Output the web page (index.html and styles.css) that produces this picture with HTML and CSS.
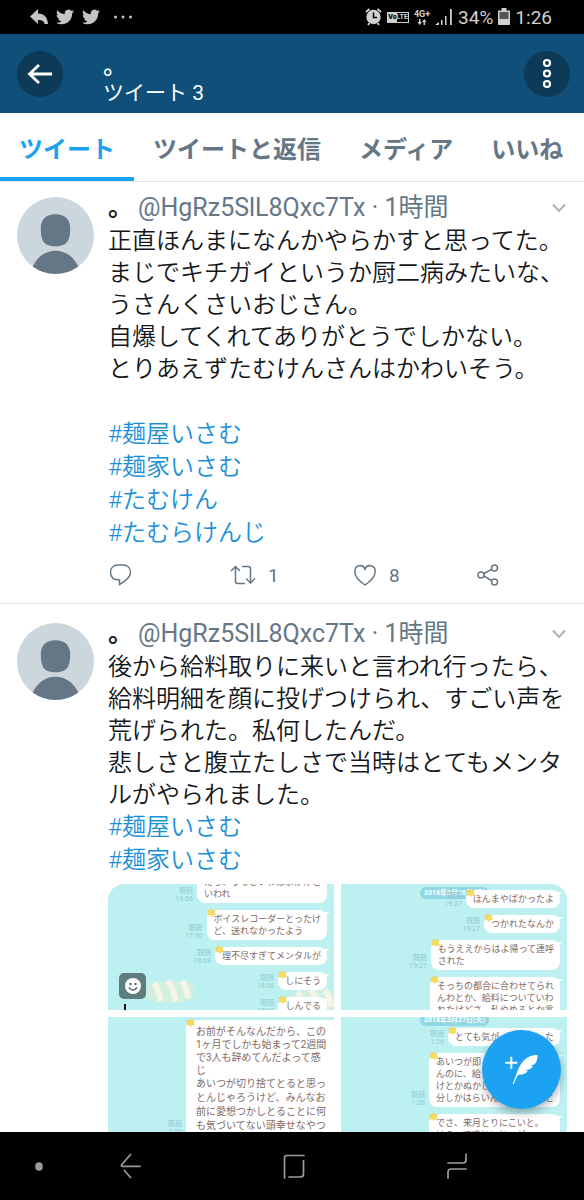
FILE: index.html
```html
<!DOCTYPE html>
<html lang="ja">
<head>
<meta charset="utf-8">
<meta name="viewport" content="width=device-width, initial-scale=1">
<title>ツイート</title>
<link rel="stylesheet" href="styles.css">
</head>
<body>
<svg class="defs" aria-hidden="true">
  <symbol id="bird" viewBox="0 0 24 24"><path fill="currentColor" d="M23.953 4.57a10 10 0 01-2.825.775 4.958 4.958 0 002.163-2.723c-.951.555-2.005.959-3.127 1.184a4.92 4.92 0 00-8.384 4.482C7.69 8.095 4.067 6.13 1.64 3.162a4.822 4.822 0 00-.666 2.475c0 1.71.87 3.213 2.188 4.096a4.904 4.904 0 01-2.228-.616v.06a4.923 4.923 0 003.946 4.827 4.996 4.996 0 01-2.212.085 4.936 4.936 0 004.604 3.417 9.867 9.867 0 01-6.102 2.105c-.39 0-.779-.023-1.17-.067a13.995 13.995 0 007.557 2.209c9.053 0 13.998-7.496 13.998-13.985 0-.21 0-.42-.015-.63A9.935 9.935 0 0024 4.59z"/></symbol>
  <symbol id="avatar" viewBox="0 0 76 76"><circle cx="38" cy="38" r="38" fill="#ccd6dd"/><path fill="#657786" d="M38 17c9 0 14.500 5 14.500 13.500 0 12-2.500 18-14.500 18s-14.500-6-14.500-18C23.500 22 29 17 38 17zM15.500 68.600C20 59 28 53 38 53s18 6 22.500 15.600A38 38 0 0 1 15.500 68.600z"/></symbol>
  <symbol id="chevron" viewBox="0 0 16 16"><path d="M2 4.500l6 6.500 6-6.500" fill="none" stroke="#aab8c2" stroke-width="2.200"/></symbol>
  <symbol id="star" viewBox="0 0 10 10"><path fill="#f9dc5c" stroke="#eac33c" stroke-width=".6" stroke-linejoin="round" d="M4.500 1l1.700 1.700 2.800-.2-1 2.500 1.400 2.200-2.500.5L5.500 9.500 3.900 7.600 1 7.800l1-2.500L.7 3.200l2.500-.3z"/></symbol>
  <symbol id="candy" viewBox="0 0 50 24"><path fill="#d3efe0" d="M2 8C9 1 38 0 45 4c7 5 5 15-1 17-9 4-36 4-41-1-4-4-4-9-1-12z"/><path d="M9 4c4 4 5 11 7 18M23 2c4 5 6 12 8 20M37 2c3 4 5 10 6 17" fill="none" stroke="#f4f5e6" stroke-width="6"/></symbol>
</svg>

<div class="screen">
  <div class="status">
    <div class="status-side">
      <svg width="18" height="18" viewBox="0 0 18 18"><path fill="#c4c4c4" d="M0 8.500L8 1v4.500c6 0 9.500 3.500 10 10.500h-3.500c-.5-3-2.500-4-6.500-4v4z"/></svg>
      <svg width="18" height="18"><use href="#bird"/></svg>
      <svg width="18" height="18"><use href="#bird"/></svg>
      <svg class="more" width="18" height="4" viewBox="0 0 18 4"><g fill="#c4c4c4"><circle cx="1.500" cy="2" r="1.500"/><circle cx="9" cy="2" r="1.500"/><circle cx="16.500" cy="2" r="1.500"/></g></svg>
    </div>
    <div class="status-side status-right">
      <svg width="17" height="18" viewBox="0 0 17 18"><circle cx="8.500" cy="9" r="7.200" fill="#d0d0d0"/><path d="M8.500 4.500v5H12" fill="none" stroke="#000" stroke-width="1.500"/><path d="M1 4l3.500-3M16 4l-3.500-3M3 17l1.500-2M14 17l-1.500-2" stroke="#d0d0d0" stroke-width="1.800"/></svg>
      <span class="volte"><b>Vo</b><i>LTE</i></span>
      <span class="network"><span>4G+</span><svg width="10" height="6" viewBox="0 0 10 6"><path fill="#d0d0d0" d="M2 0h1.500v3H5L2.700 6 .5 3H2zM6.500 6H8V3h1.500L7.300 0 5 3h1.500z"/></svg></span>
      <svg width="18" height="18" viewBox="0 0 18 18"><path fill="#d0d0d0" d="M0 17l4-3v3zM6 12h1.500v5H6zM10 8h1.500v9H10zM15 1h1.800v16H15z"/></svg>
      <span class="clock">34%</span>
      <svg width="12" height="18" viewBox="0 0 12 18"><path fill="#d0d0d0" d="M3.500 0h5v2.500H12V17H0V2.500h3.500z"/><path fill="#555" d="M1.500 4h9v7h-9z"/></svg>
      <span class="clock">1:26</span>
    </div>
  </div>

  <header class="bar">
    <button class="round" aria-label="戻る"><svg width="26" height="26" viewBox="0 0 26 26"><path d="M12 4l-9.500 9 9.500 9M3 13h22" fill="none" stroke="#fff" stroke-width="2.800"/></svg></button>
    <div class="heading"><h1>。</h1><p>ツイート 3</p></div>
    <button class="round" aria-label="メニュー"><svg width="10" height="32" viewBox="0 0 10 32"><g fill="none" stroke="#fff" stroke-width="2.200"><circle cx="5" cy="5" r="3"/><circle cx="5" cy="15.500" r="3"/><circle cx="5" cy="26" r="3"/></g></svg></button>
  </header>

  <nav class="tabs">
    <a href="#" class="tab active">ツイート</a><a href="#" class="tab">ツイートと返信</a><a href="#" class="tab">メディア</a><a href="#" class="tab">いいね</a>
  </nav>

  <main class="feed">
    <article class="tweet">
      <svg class="avatar"><use href="#avatar"/></svg>
      <div class="content">
        <div class="meta"><b>。</b><span class="handle">@HgRz5SlL8Qxc7Tx · 1時間</span><button class="plain" aria-label="その他"><svg width="16" height="16"><use href="#chevron"/></svg></button></div>
        <p class="text">正直ほんまになんかやらかすと思ってた。<br>まじでキチガイというか厨二病みたいな、<br>うさんくさいおじさん。<br>自爆してくれてありがとうでしかない。<br>とりあえずたむけんさんはかわいそう。</p>
        <p class="tags spaced"><a href="#">#麺屋いさむ</a><a href="#">#麺家いさむ</a><a href="#">#たむけん</a><a href="#">#たむらけんじ</a></p>
        <div class="actions">
          <button class="plain" aria-label="返信"><svg width="24" height="24" viewBox="0 0 24 24"><path d="M10 2h5c5 0 7.500 3.500 7.500 7.500 0 5-5 8.500-11 12v-4.500C5.500 17 2.500 14 2.500 9.500S5.500 2 10 2z" class="line"/></svg></button>
          <button class="plain" aria-label="リツイート"><svg width="26" height="24" viewBox="0 0 26 24"><path d="M1 8l4.500-4.500L10 8M5.500 4v14q0 2.500 2.500 2.500h7M12 3.500h6q2.500 0 2.500 2.500v14M16 15.500l4.500 4.500 4.500-4.500" class="line"/></svg><span>1</span></button>
          <button class="plain" aria-label="いいね"><svg width="24" height="24" viewBox="0 0 24 24"><path d="M12 22C6 18 1.800 13.500 1.800 8.500c0-6.500 8-8 10.200-2.300 2.200-5.700 10.200-4.200 10.200 2.300C22.200 13.500 18 18 12 22z" class="line"/></svg><span>8</span></button>
          <button class="plain" aria-label="共有"><svg width="24" height="24" viewBox="0 0 24 24"><path d="M8 10.500l7.500-4M8 13l7.500 4.500" class="line"/><g class="line"><circle cx="5" cy="12" r="3"/><circle cx="18.500" cy="5" r="3"/><circle cx="18.500" cy="19" r="3"/></g></svg></button>
        </div>
      </div>
    </article>

    <article class="tweet">
      <svg class="avatar"><use href="#avatar"/></svg>
      <div class="content">
        <div class="meta"><b>。</b><span class="handle">@HgRz5SlL8Qxc7Tx · 1時間</span><button class="plain" aria-label="その他"><svg width="16" height="16"><use href="#chevron"/></svg></button></div>
        <p class="text">後から給料取りに来いと言われ行ったら、<br>給料明細を顔に投げつけられ、すごい声を<br>荒げられた。私何したんだ。<br>悲しさと腹立たしさで当時はとてもメンタ<br>ルがやられました。</p>
        <p class="tags"><a href="#">#麺屋いさむ</a><a href="#">#麺家いさむ</a></p>
        <div class="gallery">
          <div class="shot shot-a">
            <svg class="candy candy-one"><use href="#candy"/></svg><svg class="candy candy-two"><use href="#candy"/></svg>
            <div class="smile"><svg width="16" height="16" viewBox="0 0 16 16"><circle cx="8" cy="8" r="8" fill="#fff"/><circle cx="5.500" cy="6" r="1.200" fill="#566"/><circle cx="10.500" cy="6" r="1.200" fill="#566"/><path d="M3.800 9.500q4.200 5 8.400 0" fill="none" stroke="#566" stroke-width="1.300"/></svg></div>
            <div class="caret"></div>
            <div class="msg"><small>既読<br>16:56</small><p>たら、うるさいわはよかけと<br>いわれ</p></div>
            <div class="msg"><small>既読<br>17:50</small><p><svg class="star"><use href="#star"/></svg>ボイスレコーダーとったけ<br>ど、送れなかったよう</p></div>
            <div class="msg"><small>既読<br>18:08</small><p><svg class="star"><use href="#star"/></svg>理不尽すぎてメンタルが</p></div>
            <div class="msg"><small>既読<br>18:08</small><p><svg class="star"><use href="#star"/></svg>しにそう</p></div>
            <div class="msg"><small>既読<br>18:08</small><p><svg class="star"><use href="#star"/></svg>しんでる</p></div>
          </div>
          <div class="shot shot-b">
            <span class="date">2018年3月26日(月)</span>
            <div class="msg"><small>既読<br>19:27</small><p><svg class="star"><use href="#star"/></svg>ほんまやばかったよ</p></div>
            <div class="msg"><small>既読<br>19:27</small><p><svg class="star"><use href="#star"/></svg>つかれたなんか</p></div>
            <div class="msg"><small>既読<br>19:27</small><p><svg class="star"><use href="#star"/></svg>もうええからはよ帰って連呼<br>された</p></div>
            <div class="msg"><p><svg class="star"><use href="#star"/></svg>そっちの都合に合わせてられ<br>んわとか、給料についていわ<br>れたけどさ、私やめるとか言</p></div>
          </div>
          <div class="shot shot-c">
            <small>既読<br>1:23</small>
            <div class="long"><svg class="star"><use href="#star"/></svg><p>お前がそんなんだから、この<br>1ヶ月でしかも始まって2週間<br>で3人も辞めてんだよって感<br>じ</p><p class="loose">あいつが切り捨てとると思っ<br>とんじゃろうけど、みんなお<br>前に愛想つかしとることに何<br>も気づいてない頭幸せなやつ</p></div>
          </div>
          <div class="shot shot-d">
            <span class="date">2018年3月27日(火)</span>
            <div class="msg"><small>既読<br>1:26</small><p class="mid"><svg class="star"><use href="#star"/></svg><span class="split"><span>とても気が</span><span>た</span></span></p></div>
            <div class="msg"><small>既読<br>1:26</small><p class="wide"><svg class="star"><use href="#star"/></svg>あいつが即<br>んのに、給<br>けとかぬかし<br><span class="split"><span>分しかはらいん</span><span>と</span></span></p></div>
            <div class="msg"><p class="wide"><svg class="star"><use href="#star"/></svg>でさ、来月とりにこいと。<br>は？って感じにじゃが</p></div>
          </div>
        </div>
      </div>
    </article>
    <button class="compose" aria-label="ツイートする"><svg width="33" height="29" viewBox="0 0 33 29"><path d="M.3 7.800h12M6.300 1.800v12" stroke="#fff" stroke-width="2"/><path fill="#fff" d="M32.500 0C29 0 26.500.5 24 1.700 21 3.200 18.500 5.500 16.700 8c-2 3-3.500 6-4.700 9.500L7.700 29h1.200c1.200-3.500 2.600-6.500 4.400-9.200 3.700.3 7-.8 9.700-3.800l-2.800-.6c3.300-.4 5.800-1.700 7.800-4l-2.600-.7C28.500 10.200 30 9 31 7.500c1.200-2.500 1.500-5 1.500-7.500z"/></svg></button>
  </main>

  <footer class="system">
    <button class="plain" aria-label="ナビゲーション固定"><svg width="8" height="9" viewBox="0 0 8 9"><ellipse cx="4" cy="4.500" rx="3.800" ry="4.300" fill="#9c9c9c"/></svg></button>
    <button class="plain" aria-label="前の画面"><svg width="24" height="26" viewBox="0 0 24 26"><path d="M11.500 1.500L2.500 12q-.5 1.300 1 1.300H21M11.500 24.500L5.500 17.500" class="key"/></svg></button>
    <button class="plain" aria-label="ホーム"><svg width="24" height="26" viewBox="0 0 24 26"><path d="M2.500 25V5q0-2.500 2.500-2.500h17M21.500 7.500V21q0 3-3 3H7" class="key"/></svg></button>
    <button class="plain" aria-label="履歴"><svg width="24" height="28" viewBox="0 0 24 28"><path d="M3 11h15q3 0 3-3V2M3 26v-6q0-3 3-3h15" class="key"/></svg></button>
  </footer>
</div>
</body>
</html>
```
FILE: styles.css
```css
* { box-sizing: border-box; }
body {
  margin: 0;
  font-family: Roboto, "Noto Sans CJK JP", sans-serif;
  color: #14171a;
  background: #fff;
}
h1, p { margin: 0; }
a { color: inherit; text-decoration: none; }
svg { display: block; flex: none; }
button { font: inherit; color: inherit; border: 0; padding: 0; }
.plain { background: none; display: flex; align-items: center; }
.defs { position: absolute; width: 0; height: 0; }

.screen { display: flex; flex-direction: column; height: 100vh; }

.status {
  flex: none;
  height: 34px;
  padding: 0 32px 0 30px;
  background: #000;
  color: #c4c4c4;
  display: flex;
  align-items: center;
  justify-content: space-between;
}
.status-side { display: flex; align-items: center; gap: 8px; }
.status-right { gap: 5px; color: #d0d0d0; }
.more { margin-left: 6px; }
.clock { font-size: 19px; }
.volte {
  display: flex;
  font: bold 7px/9px Roboto, sans-serif;
  border: 1px solid #d0d0d0;
}
.volte b { background: #d0d0d0; color: #000; }
.volte i { font-style: normal; }
.network {
  display: flex;
  flex-direction: column;
  align-items: center;
  font: bold 9px/9px Roboto, sans-serif;
}

.bar {
  flex: none;
  display: flex;
  align-items: center;
  height: 79px;
  padding: 0 14px 0 17px;
  background: #104f79;
  color: #fff;
}
.round {
  width: 46px;
  height: 46px;
  border-radius: 50%;
  background: #0d3a57;
  display: flex;
  align-items: center;
  justify-content: center;
}
.heading { flex: 1; padding: 12px 0 0 40px; }
.heading h1 { font-size: 24px; line-height: 26px; font-weight: 500; }
.heading p { font-size: 21px; line-height: 28px; }

.tabs {
  flex: none;
  display: flex;
  height: 69px;
  border-bottom: 1px solid #dfe5e9;
  color: #657786;
  font-size: 24px;
  font-weight: bold;
  white-space: nowrap;
}
.tab { height: 68px; padding: 0 19px; line-height: 75px; }
.tab.active { color: #1da1f2; border-bottom: 4px solid #1da1f2; }

.feed { flex: 1; min-height: 0; overflow: hidden; position: relative; }
.tweet {
  display: flex;
  gap: 14px;
  padding: 16px 17px;
  border-bottom: 1px solid #dfe5e9;
}
.tweet:first-child { padding-top: 12px; }
.avatar { width: 77px; height: 77px; margin-top: 3px; }
.content { flex: 1; min-width: 0; }
.meta { display: flex; align-items: center; height: 28px; font-size: 25px; line-height: 28px; }
.meta b { width: 30px; }
.handle { flex: 1; color: #657786; white-space: nowrap; }
.text { margin-top: 3px; font-size: 24px; line-height: 32px; font-weight: 350; white-space: nowrap; }
.tags { font-size: 24px; line-height: 33px; font-weight: 350; color: #1b8fd8; }
.tags a { display: table; }
.spaced { margin-top: 33px; }

.actions {
  display: grid;
  grid-template-columns: 122fr 123fr 123fr 91fr;
  height: 24px;
  margin-top: 13px;
  color: #657786;
  font-size: 19px;
}
.actions button { gap: 12px; }
.line { fill: none; stroke: #657786; stroke-width: 1.500; }

.gallery {
  display: grid;
  grid-template-columns: 1fr 1fr;
  grid-auto-rows: 126px;
  gap: 7px;
  margin-top: 7px;
  border-radius: 16px;
  overflow: hidden;
}
.shot {
  position: relative;
  overflow: hidden;
  background: #bdf0f1;
  display: flex;
  flex-direction: column;
  align-items: flex-end;
  gap: 7px;
  padding: 0 7px;
  color: #806a66;
  white-space: nowrap;
}
.shot small { font-size: 7px; line-height: 8px; color: #8fcbd2; text-align: right; }
.msg { position: relative; flex: none; display: flex; align-items: flex-end; gap: 4px; }
.msg p {
  position: relative;
  padding: 3px 6px 3px 7px;
  border-radius: 8px;
  background: #fff;
  font-size: 9px;
  line-height: 12px;
}
.msg p::after {
  content: "";
  position: absolute;
  top: 2px;
  right: -3px;
  border-top: 2px solid #fff;
  border-right: 3px solid transparent;
  border-bottom: 3px solid transparent;
  border-left: 3px solid #fff;
}
.msg .mid { width: 112px; }
.msg .wide { width: 131px; }
.split { display: flex; justify-content: space-between; }
.star { position: absolute; top: -2px; left: 0; width: 9px; height: 9px; }
.date {
  position: absolute;
  top: 3px;
  left: 79px;
  padding: 0 4px;
  border-radius: 6px;
  background: #91d6e3;
  color: #fff;
  font-size: 7px;
  line-height: 12px;
  font-weight: bold;
}
.shot-a .msg:nth-of-type(3) { margin-top: -11px; }
.shot-b { padding-top: 6px; }
.shot-c { flex-direction: row; align-items: flex-start; justify-content: flex-end; padding: 3px 0 0; gap: 4px; }
.shot-c small { margin-top: 100px; }
.shot-d { padding-top: 11px; }
.shot-d .date { top: -3px; }
.long {
  position: relative;
  width: 148px;
  height: 124px;
  padding: 5px 0 0 10px;
  background: #fff;
  border-top-left-radius: 6px;
  font-size: 10px;
  line-height: 13px;
}
.loose { line-height: 14px; }
.candy { position: absolute; width: 50px; height: 26px; }
.candy-one { left: 37px; top: 94px; }
.candy-two { left: 180px; top: 103px; }
.smile {
  position: absolute;
  left: 11px;
  top: 89px;
  width: 27px;
  height: 26px;
  border-radius: 5px;
  background: #5d7d7e;
  display: flex;
  align-items: center;
  justify-content: center;
}
.caret { position: absolute; left: 16px; bottom: 0; width: 2px; height: 6px; background: #111; }

.compose {
  position: absolute;
  right: 23px;
  bottom: 23px;
  width: 79px;
  height: 79px;
  border-radius: 50%;
  background: #1da1f2;
  box-shadow: 0 4px 8px rgba(0, 0, 0, .3);
  display: flex;
  align-items: center;
  justify-content: center;
}

.system {
  flex: none;
  height: 68px;
  background: #000;
  display: grid;
  grid-template-columns: 78fr 106fr 220fr 106fr 74fr;
}
.system button { justify-content: center; }
.key { fill: none; stroke: #9c9c9c; stroke-width: 1.700; stroke-linecap: round; }
```
